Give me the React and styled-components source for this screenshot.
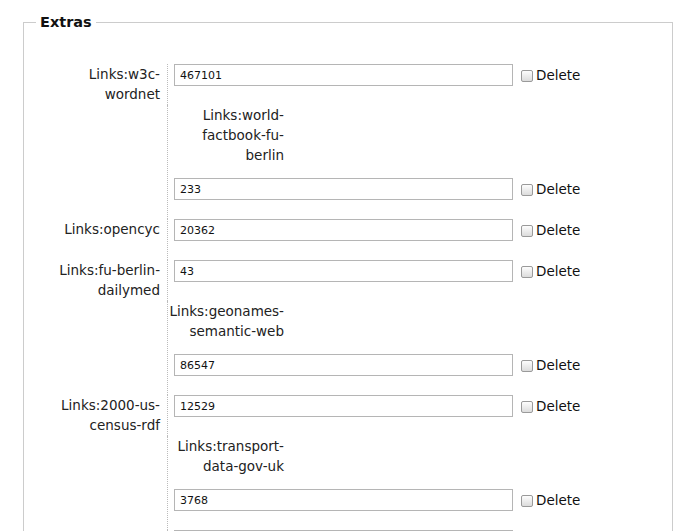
import React from "react";
import styled, { createGlobalStyle } from "styled-components";

const GlobalStyle = createGlobalStyle`
  body {
    margin: 8px;
    background: #ffffff;
    font-family: "DejaVu Sans", Verdana, sans-serif;
    color: #222222;
  }
`;

const Fieldset = styled.fieldset`
  margin: 6px 11px 0 15px;
  padding: 34px 0 0 0;
  border: 1px solid #cccccc;
  min-width: 0;
`;

const Legend = styled.legend`
  margin-left: 12px;
  padding: 0 4px;
  font-size: 14.5px;
  font-weight: bold;
  color: #111111;
`;

const Row = styled.div`
  display: grid;
  grid-template-columns: 143px 1fr;
`;

const LabelCell = styled.div`
  display: flex;
  justify-content: flex-end;
  align-items: flex-start;
`;

const Label = styled.label`
  width: 116px;
  padding-right: 7px;
  text-align: right;
  font-size: 13.5px;
  line-height: 20px;
  white-space: pre-line;
  margin-left: ${(p) => (p.$inner ? "-6px" : "0")};
  margin-bottom: ${(p) => (p.$inner ? "13px" : "0")};
`;

const FieldCell = styled.div`
  border-left: 1px dotted #bbbbbb;
  padding: 0 0 19px 6px;
  display: flex;
  flex-direction: column;
  align-items: flex-start;
`;

const FieldLine = styled.div`
  display: flex;
  align-items: center;
  height: 22px;
`;

const TextInput = styled.input`
  box-sizing: border-box;
  width: 339px;
  height: 22px;
  margin: 0;
  padding: 0 5px;
  border: 1px solid #b5b5b5;
  font-family: "DejaVu Sans", Verdana, sans-serif;
  font-size: 11px;
  color: #111111;
  background: #ffffff;
`;

const Check = styled.input`
  appearance: none;
  width: 12px;
  height: 12px;
  margin: 1px 3px 0 8px;
  border: 1px solid #9a9a9a;
  border-radius: 2px;
  background: linear-gradient(#fdfdfd, #dcdcdc);
  box-sizing: border-box;
`;

const CheckLabel = styled.span`
  font-size: 13.5px;
  color: #111111;
`;

const rows = [
  { label: "Links:w3c-\nwordnet", value: "467101" },
  { inner: "Links:world-\nfactbook-fu-\nberlin", value: "233" },
  { label: "Links:opencyc", value: "20362" },
  { label: "Links:fu-berlin-\ndailymed", value: "43" },
  { inner: "Links:geonames-\nsemantic-web", value: "86547" },
  { label: "Links:2000-us-\ncensus-rdf", value: "12529" },
  { inner: "Links:transport-\ndata-gov-uk", value: "3768" },
  { label: "", value: "1820" },
];

function ExtraRow({ label, inner, value }) {
  return (
    <Row>
      <LabelCell>{label && <Label>{label}</Label>}</LabelCell>
      <FieldCell>
        {inner && <Label $inner>{inner}</Label>}
        <FieldLine>
          <TextInput defaultValue={value} />
          <Check type="checkbox" />
          <CheckLabel>Delete</CheckLabel>
        </FieldLine>
      </FieldCell>
    </Row>
  );
}

export default function App() {
  return (
    <>
      <GlobalStyle />
      <Fieldset>
        <Legend>Extras</Legend>
        {rows.map((r, i) => (
          <ExtraRow key={i} {...r} />
        ))}
      </Fieldset>
    </>
  );
}
